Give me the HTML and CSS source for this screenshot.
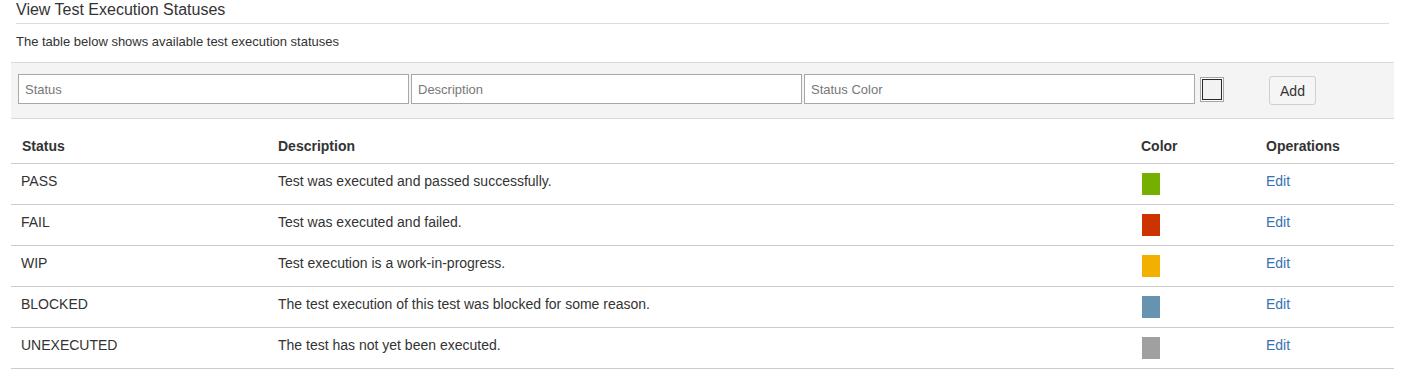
FILE: index.html
```html
<!DOCTYPE html>
<html lang="en">
<head>
<meta charset="utf-8">
<title>View Test Execution Statuses</title>
<link rel="stylesheet" href="styles.css">
</head>
<body>
<div class="page">
  <header class="page-head">
    <h2 class="page-title">View Test Execution Statuses</h2>
  </header>
  <p class="page-desc">The table below shows available test execution statuses</p>

  <form class="add-form">
    <input class="field" type="text" placeholder="Status">
    <input class="field" type="text" placeholder="Description">
    <input class="field" type="text" placeholder="Status Color">
    <span class="color-pick"><span class="color-pick-inner"></span></span>
    <button class="btn-add" type="button">Add</button>
  </form>

  <table class="status-table">
    <colgroup>
      <col class="c-status">
      <col class="c-desc">
      <col class="c-color">
      <col class="c-ops">
    </colgroup>
    <thead>
      <tr><th>Status</th><th>Description</th><th>Color</th><th>Operations</th></tr>
    </thead>
    <tbody>
      <tr><td>PASS</td><td>Test was executed and passed successfully.</td><td><span class="swatch swatch-pass"></span></td><td><a class="edit" href="#">Edit</a></td></tr>
      <tr><td>FAIL</td><td>Test was executed and failed.</td><td><span class="swatch swatch-fail"></span></td><td><a class="edit" href="#">Edit</a></td></tr>
      <tr><td>WIP</td><td>Test execution is a work-in-progress.</td><td><span class="swatch swatch-wip"></span></td><td><a class="edit" href="#">Edit</a></td></tr>
      <tr><td>BLOCKED</td><td>The test execution of this test was blocked for some reason.</td><td><span class="swatch swatch-blocked"></span></td><td><a class="edit" href="#">Edit</a></td></tr>
      <tr><td>UNEXECUTED</td><td>The test has not yet been executed.</td><td><span class="swatch swatch-unexec"></span></td><td><a class="edit" href="#">Edit</a></td></tr>
    </tbody>
  </table>
</div>
</body>
</html>
```

FILE: styles.css
```css
* { box-sizing: border-box; }

html, body {
  margin: 0;
  padding: 0;
  background: #fff;
}

body {
  font-family: "Liberation Sans", Arial, sans-serif;
  color: #333;
  font-size: 14px;
}

.page {
  width: 1383px;
  margin-left: 11px;
}

.page-head {
  margin: 0 5px;
  padding-bottom: 3px;
  border-bottom: 1px solid #dcdcdc;
}

.page-title {
  margin: 0;
  font-size: 16px;
  font-weight: normal;
  line-height: 20px;
  color: #333;
}

.page-desc {
  margin: 9px 5px 11px;
  font-size: 13px;
  line-height: 18px;
  color: #333;
}

.add-form {
  display: flex;
  align-items: flex-start;
  background: #f4f4f4;
  border-top: 1px solid #dadada;
  border-bottom: 1px solid #dadada;
  padding: 11px 7px 13px;
  margin: 0;
}

.field {
  width: 391px;
  height: 30px;
  margin-right: 2px;
  border: 1px solid #a8a8a8;
  border-radius: 0;
  background: #fff;
  padding: 0 6px;
  font-family: "Liberation Sans", Arial, sans-serif;
  font-size: 13px;
  color: #333;
  outline: none;
}

.field::placeholder {
  color: #777;
}

.color-pick {
  display: flex;
  width: 24px;
  height: 25px;
  margin: 3px 0 0 3px;
  border: 1px solid #a6a6a6;
  padding: 1px;
  background: #fafafa;
}

.color-pick-inner {
  flex: 1;
  border: 1px solid #2a2a2a;
  background: #f2f2f2;
}

.btn-add {
  width: 47px;
  height: 29px;
  margin: 2px 0 0 45px;
  border: 1px solid #cfcfcf;
  border-radius: 3px;
  background: #f5f5f5;
  font-family: "Liberation Sans", Arial, sans-serif;
  font-size: 14px;
  color: #333;
  padding: 0;
  cursor: pointer;
}

.status-table {
  width: 1383px;
  margin-top: 10px;
  border-collapse: collapse;
  table-layout: fixed;
}

.c-status { width: 257px; }
.c-desc { width: 863px; }
.c-color { width: 125px; }
.c-ops { width: 138px; }

.status-table th {
  text-align: left;
  font-weight: bold;
  font-size: 14px;
  line-height: 20px;
  padding: 7px 10px 7px 10px;
  border-bottom: 1px solid #cccccc;
  color: #333;
}

.status-table th:first-child {
  padding-left: 11px;
}

.status-table td {
  vertical-align: top;
  font-size: 14px;
  line-height: 20px;
  padding: 7px 10px 9px 10px;
  border-bottom: 1px solid #cccccc;
  color: #333;
}

.swatch {
  display: block;
  width: 18px;
  height: 22px;
  margin: 2px 0 0 1px;
}

.swatch-pass { background: #75b000; }
.swatch-fail { background: #cc3300; }
.swatch-wip { background: #f2b000; }
.swatch-blocked { background: #6693b0; }
.swatch-unexec { background: #a0a0a0; }

.edit {
  color: #3572b0;
  text-decoration: none;
}
```
